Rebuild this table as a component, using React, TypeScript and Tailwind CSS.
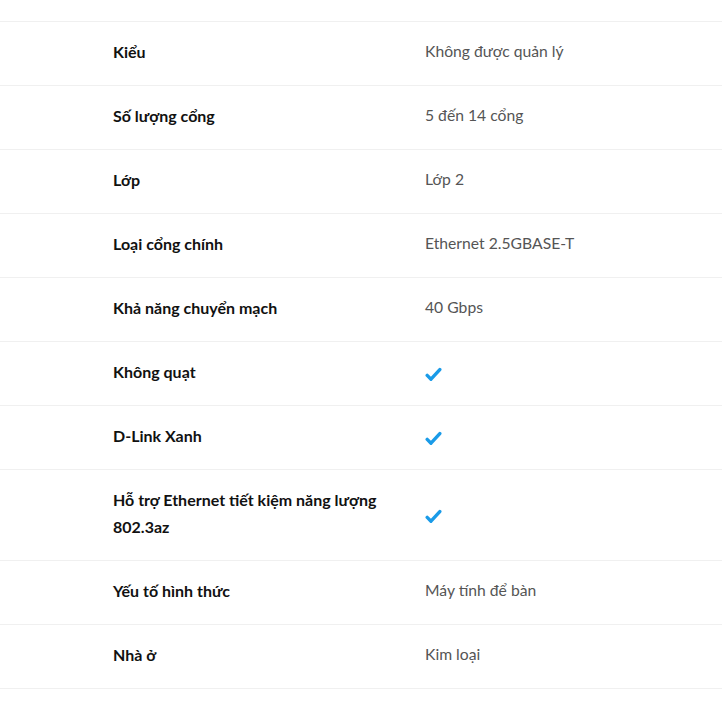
type Spec = { label: string; value?: string; check?: boolean };

const SPECS: Spec[] = [
  { label: "Kiểu", value: "Không được quản lý" },
  { label: "Số lượng cổng", value: "5 đến 14 cổng" },
  { label: "Lớp", value: "Lớp 2" },
  { label: "Loại cổng chính", value: "Ethernet 2.5GBASE-T" },
  { label: "Khả năng chuyển mạch", value: "40 Gbps" },
  { label: "Không quạt", check: true },
  { label: "D-Link Xanh", check: true },
  { label: "Hỗ trợ Ethernet tiết kiệm năng lượng 802.3az", check: true },
  { label: "Yếu tố hình thức", value: "Máy tính để bàn" },
  { label: "Nhà ở", value: "Kim loại" },
];

function CheckIcon() {
  return (
    <svg
      width="17"
      height="15"
      viewBox="0 0 17 15"
      fill="none"
      className="translate-y-[3px] text-[#1a9be8]"
    >
      <path
        d="M2.2 8.4 L6 12.2 L14.8 2.6"
        stroke="currentColor"
        strokeWidth="3.4"
        strokeLinecap="round"
        strokeLinejoin="round"
      />
    </svg>
  );
}

function SpecRow({ spec }: { spec: Spec }) {
  return (
    <div className="grid grid-cols-[312px_1fr] border-b border-[#f0f0f0] pl-[113px] pt-[16px] pb-[20px] text-base leading-[27px]">
      <div className="pr-[30px] font-bold text-[#111]">{spec.label}</div>
      <div className="flex items-center text-[15.7px] text-[#555]">
        {spec.check ? <CheckIcon /> : spec.value}
      </div>
    </div>
  );
}

export default function App() {
  return (
    <div
      className="w-[722px] min-h-[721px] bg-white pt-[21px]"
      style={{ fontFamily: "Lato, 'Noto Sans', sans-serif" }}
    >
      <div className="border-t border-[#f0f0f0]">
        {SPECS.map((s) => (
          <SpecRow key={s.label} spec={s} />
        ))}
      </div>
    </div>
  );
}
